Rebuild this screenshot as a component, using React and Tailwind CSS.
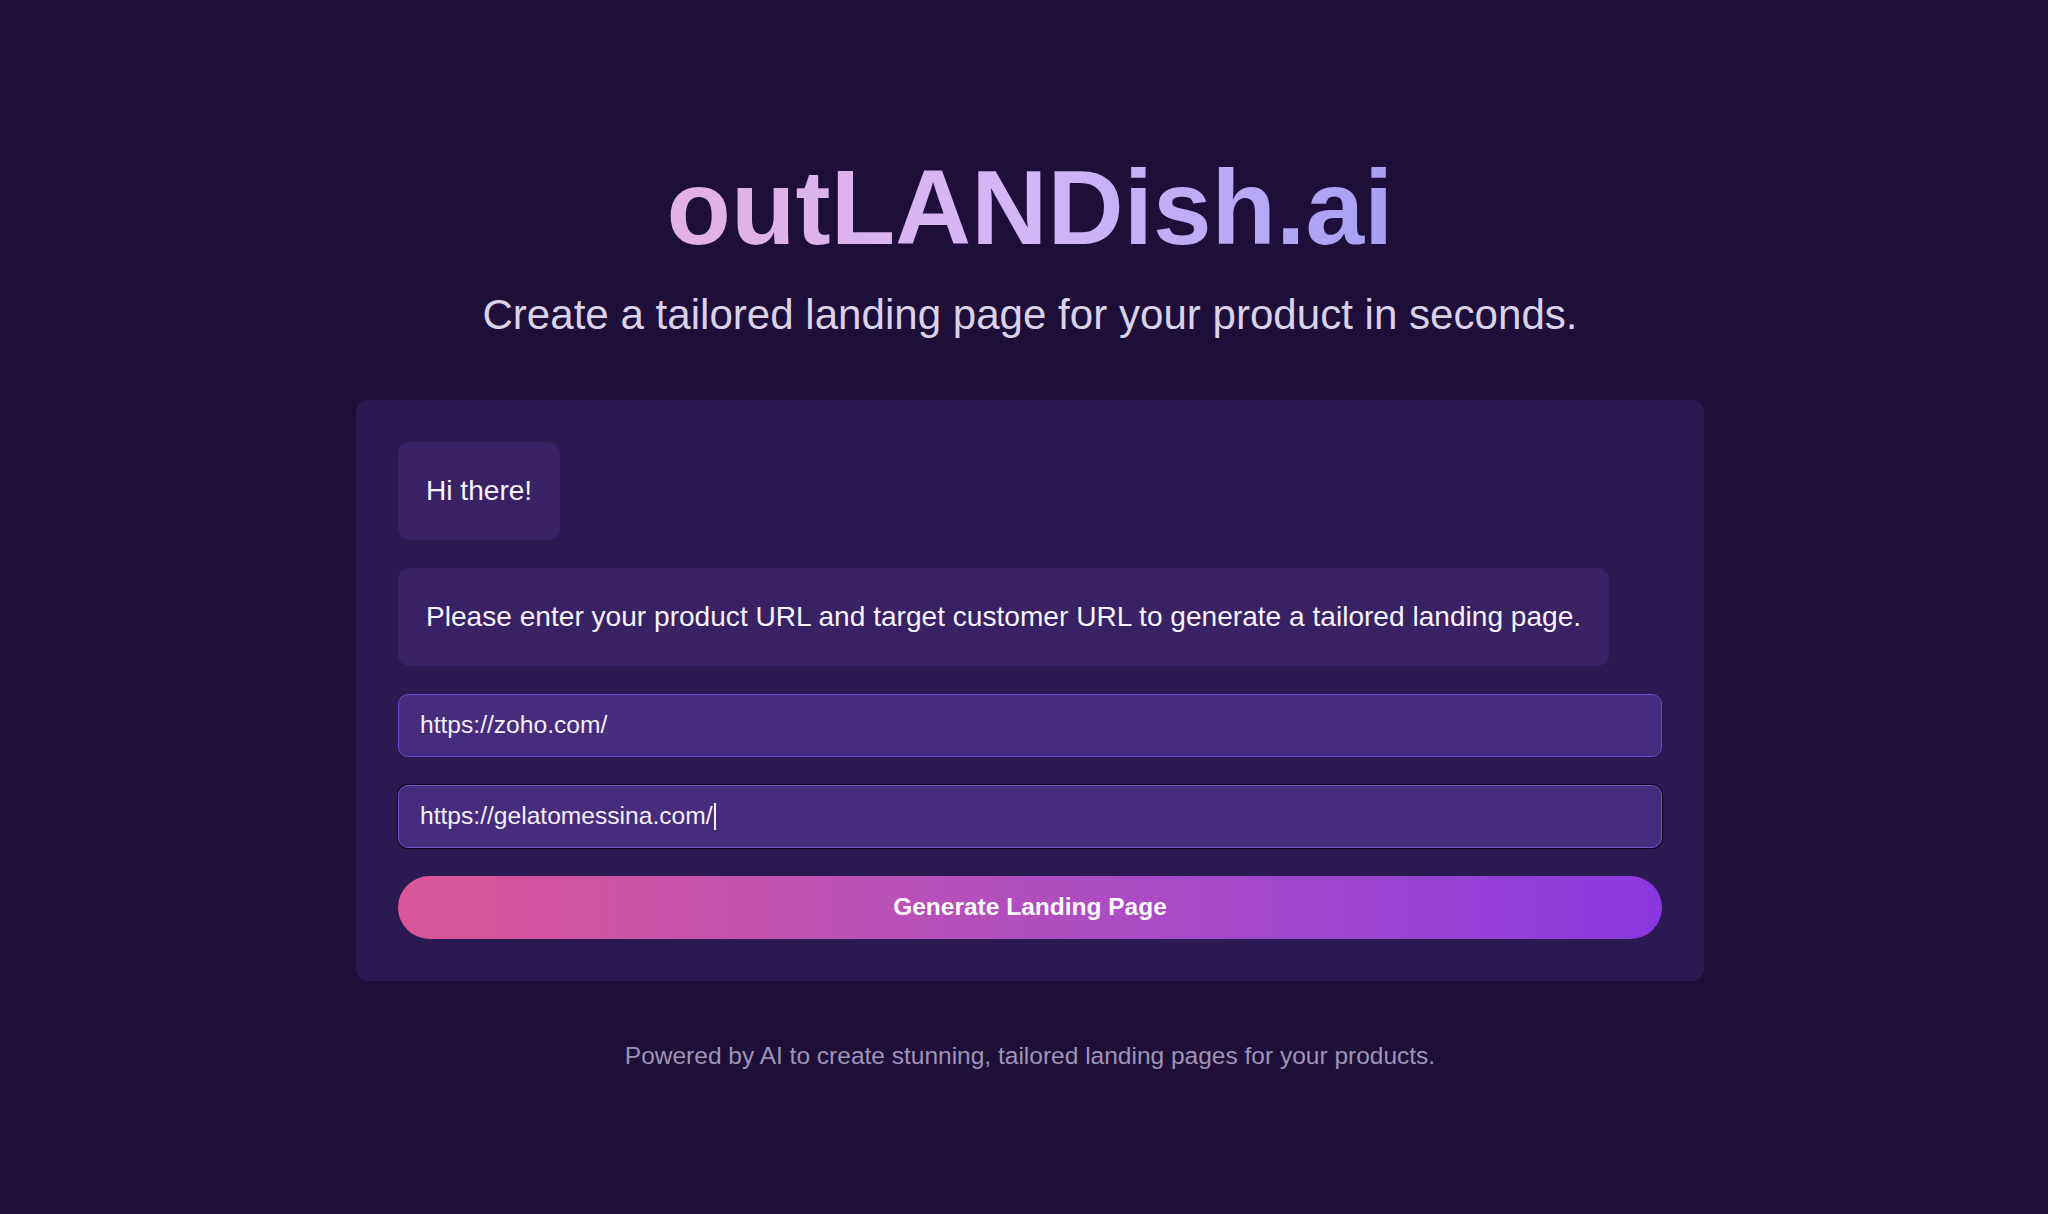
import React from 'react';

export default function App() {
  return (
    <div className="min-h-screen w-full bg-[#1d0e3a] font-['Liberation_Sans',Arial,sans-serif] pl-3">
      <div className="flex flex-col items-center pt-[144px]">
        {/* Header */}
        <h1 className="text-[105.5px] font-bold leading-[1.2] bg-linear-to-r from-[#e3b0e5] via-[#d2b7f7] to-[#a69ff1] bg-clip-text text-transparent">
          outLANDish.ai
        </h1>
        <p className="mt-[19px] text-[42.1px] leading-[1.2] text-[#d9d2e8]">
          Create a tailored landing page for your product in seconds.
        </p>

        {/* Chat card */}
        <div className="mt-[60px] w-[1348px] rounded-xl bg-[#2b1a52] p-[42px] flex flex-col gap-7">
          <div className="self-start rounded-xl bg-[#382264] p-7 text-[28.1px] leading-[42px] text-[#f6f2ff]">
            Hi there!
          </div>
          <div className="self-start rounded-xl bg-[#382264] p-7 text-[28.1px] leading-[42px] text-[#f6f2ff]">
            Please enter your product URL and target customer URL to generate a tailored landing page.
          </div>

          <div className="h-[63px] rounded-[10px] border border-[#6a48c6] bg-[#462c7c] px-[21px] flex items-center text-[24.6px] text-[#f4efff]">
            https://zoho.com/
          </div>
          <div className="h-[63px] rounded-[10px] border border-[#7052cc] bg-[#462c7c] ring-1 ring-[#0c061c] px-[21px] flex items-center text-[24.6px] text-[#f4efff]">
            https://gelatomessina.com/
            <span className="ml-[1px] inline-block h-[27px] w-[2px] bg-[#f4efff]" />
          </div>

          <button className="h-[63px] rounded-full bg-linear-to-r from-[#db5598] to-[#8a37e0] text-[24.5px] font-bold text-[#fbf7ff]">
            Generate Landing Page
          </button>
        </div>

        {/* Footer */}
        <p className="mt-[57px] text-[24.5px] leading-[1.5] text-[#9e95b6]">
          Powered by AI to create stunning, tailored landing pages for your products.
        </p>
      </div>
    </div>
  );
}
